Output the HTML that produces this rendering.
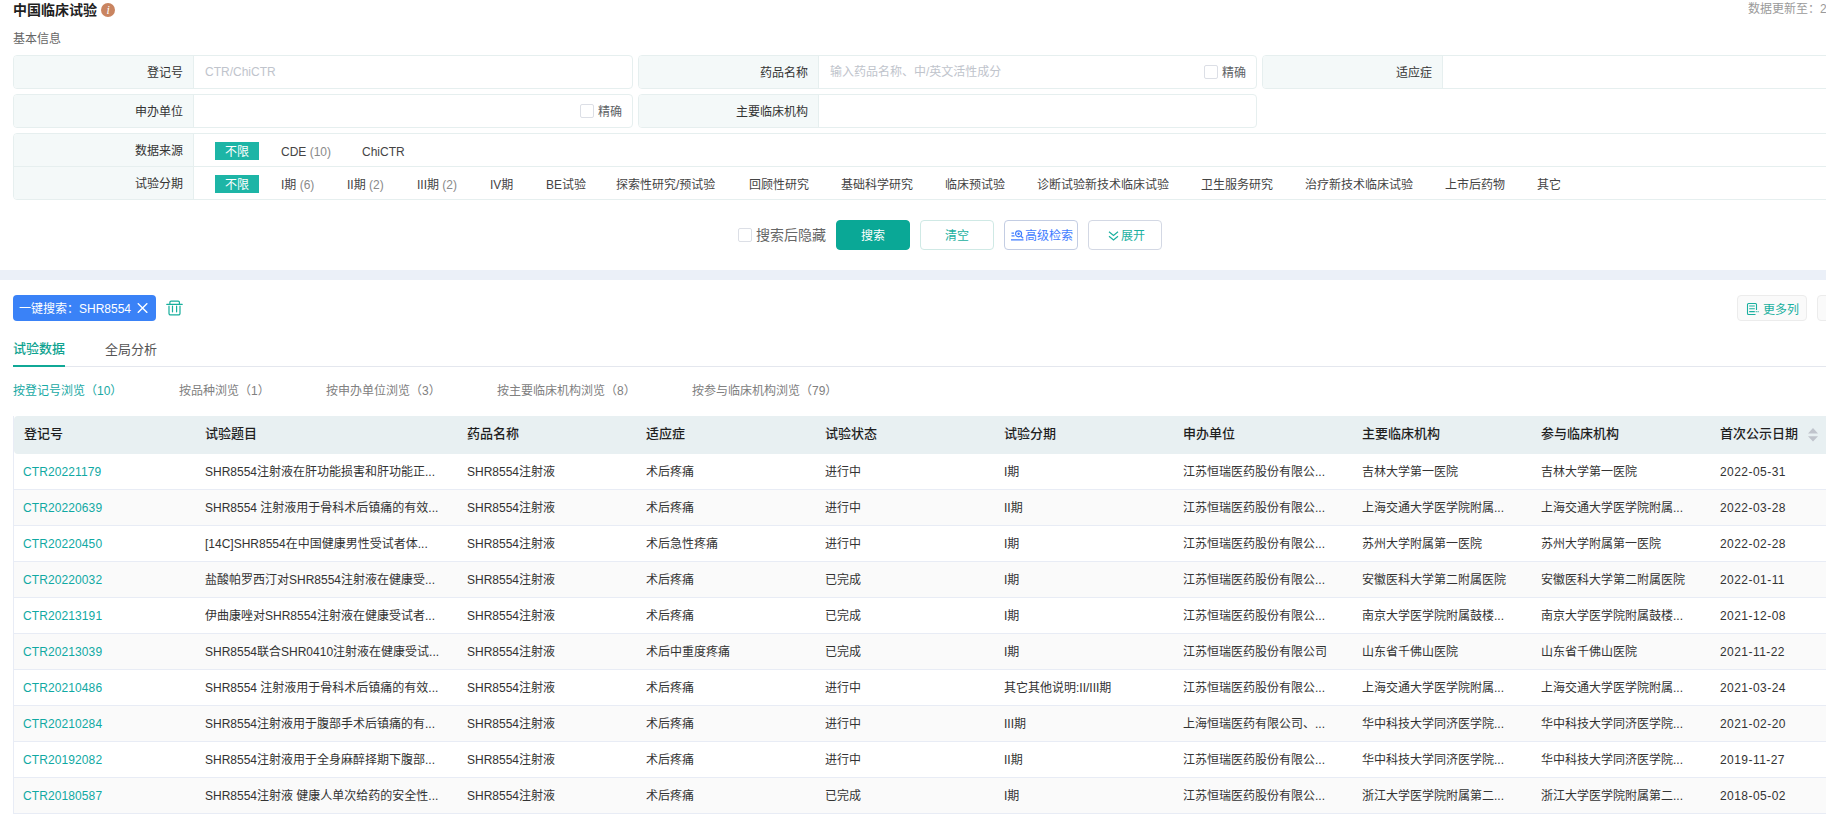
<!DOCTYPE html>
<html lang="zh-CN"><head><meta charset="utf-8"><title>中国临床试验</title>
<style>
*{box-sizing:border-box;margin:0;padding:0}
html,body{width:1826px;height:816px;overflow:hidden;background:#fff}
body{position:relative;font-family:"Liberation Sans", "Noto Sans CJK SC", sans-serif;font-size:12px;color:#333;line-height:1}
.a{position:absolute;white-space:nowrap}
.t{position:absolute;white-space:nowrap;line-height:20px;height:20px}
.l{letter-spacing:0.35px}
.box{position:absolute;border:1px solid #e6efef;border-radius:4px;background:#fff;overflow:hidden}
.lab{position:absolute;left:0;top:0;bottom:0;width:180px;background:#f4f9f9;border-right:1px solid #e6efef}
.labt{position:absolute;right:10px;white-space:nowrap;line-height:20px;color:#333}
.ph{color:#c0c4cc}
.cb{position:absolute;width:14px;height:14px;border:1px solid #dcdfe6;border-radius:2px;background:#fff}
.tag{position:absolute;width:44px;height:18px;background:#1db5a6;color:#fff;text-align:center;line-height:20px}
.opt{position:absolute;white-space:nowrap;line-height:20px;height:20px;color:#444}
.opt i{font-style:normal;color:#8a8a8a}
.btn{position:absolute;height:30px;width:74px;border-radius:4px;border:1px solid #dcdfe6;background:#fff;line-height:30px;text-align:center;font-size:12px}
.teal{color:#1ab09f}
.th{position:absolute;top:415px;line-height:38px;height:38px;font-size:13px;font-weight:500;color:#1f1f1f;white-space:nowrap}
.row{position:absolute;left:14px;width:1812px;height:36px;border-bottom:1px solid #e8ecf5}
.row.s{background:#fafafa}
.c{position:absolute;top:1px;line-height:35px;height:35px;white-space:nowrap;color:#333}
.c.k{color:#10a9a3;letter-spacing:0.1px;margin-left:-1px}
.c.d{letter-spacing:0.45px}
.st{position:absolute;top:384px;line-height:14px;color:#808080;white-space:nowrap}
</style></head>
<body>
<div class="a" style="left:13px;top:0;line-height:20px;font-size:14px;font-weight:bold;color:#1f1f1f">中国临床试验</div>
<svg class="a" style="left:101px;top:3px" width="14" height="14" viewBox="0 0 14 14"><circle cx="7" cy="7" r="7" fill="#c98460"/><text x="7.2" y="11" font-size="12" font-style="italic" font-family="Liberation Serif, serif" fill="#fff" text-anchor="middle">i</text></svg>
<div class="a" style="left:13px;top:29px;line-height:20px;color:#666">基本信息</div>
<div class="a" style="left:1748px;top:-1px;line-height:20px;color:#9a9a9a">数据更新至：2022-06-01</div>
<div class="box" style="left:13px;top:55px;width:620px;height:34px"><div class="lab"><span class="labt" style="top:7px">登记号</span></div><span class="t ph" style="left:191px;top:6px">CTR/ChiCTR</span></div>
<div class="box" style="left:638px;top:55px;width:619px;height:34px"><div class="lab"><span class="labt" style="top:7px">药品名称</span></div><span class="t ph" style="left:191px;top:6px">输入药品名称、中/英文活性成分</span><span class="cb" style="left:565px;top:9px"></span><span class="t" style="left:583px;top:7px;color:#606266">精确</span></div>
<div class="box" style="left:1262px;top:55px;width:620px;height:34px"><div class="lab"><span class="labt" style="top:7px">适应症</span></div></div>
<div class="box" style="left:13px;top:94px;width:620px;height:34px"><div class="lab"><span class="labt" style="top:7px">申办单位</span></div><span class="cb" style="left:566px;top:9px"></span><span class="t" style="left:584px;top:7px;color:#606266">精确</span></div>
<div class="box" style="left:638px;top:94px;width:619px;height:34px"><div class="lab"><span class="labt" style="top:7px">主要临床机构</span></div></div>
<div class="box" style="left:13px;top:133px;width:1840px;height:67px"><div class="lab"><span class="labt" style="top:7px">数据来源</span><span class="labt" style="top:40px">试验分期</span></div><div class="a" style="left:0;top:32px;width:1840px;height:1px;background:#e6efef"></div><span class="tag" style="left:201px;top:8px">不限</span><span class="opt" style="left:267px;top:8px">CDE <i>(10)</i></span><span class="opt" style="left:348px;top:8px">ChiCTR</span><span class="tag" style="left:201px;top:41px">不限</span><span class="opt" style="left:267px;top:41px">I期 <i>(6)</i></span><span class="opt" style="left:333px;top:41px">II期 <i>(2)</i></span><span class="opt" style="left:403px;top:41px">III期 <i>(2)</i></span><span class="opt" style="left:476px;top:41px">IV期</span><span class="opt" style="left:532px;top:41px">BE试验</span><span class="opt" style="left:602px;top:41px">探索性研究/预试验</span><span class="opt" style="left:735px;top:41px">回顾性研究</span><span class="opt" style="left:827px;top:41px">基础科学研究</span><span class="opt" style="left:931px;top:41px">临床预试验</span><span class="opt" style="left:1023px;top:41px">诊断试验新技术临床试验</span><span class="opt" style="left:1187px;top:41px">卫生服务研究</span><span class="opt" style="left:1291px;top:41px">治疗新技术临床试验</span><span class="opt" style="left:1431px;top:41px">上市后药物</span><span class="opt" style="left:1523px;top:41px">其它</span></div>
<span class="cb" style="left:738px;top:228px"></span><div class="a" style="left:756px;top:225px;line-height:20px;font-size:14px;color:#666">搜索后隐藏</div>
<div class="btn" style="left:836px;top:220px;background:#0aa896;border-color:#0aa896;color:#fff">搜索</div>
<div class="btn teal" style="left:920px;top:220px;border-color:#cfe9e5">清空</div>
<div class="btn" style="left:1004px;top:220px;border-color:#c3cde3;color:#3f7cff;text-align:left"><svg class="a" style="left:6px;top:9px" width="13" height="11" viewBox="0 0 13 11" fill="none" stroke="#3f7cff" stroke-width="1.2"><circle cx="7.6" cy="3.8" r="3"/><circle cx="7.6" cy="3.8" r="0.6" fill="#3f7cff"/><path d="M9.8 6l2.4 2.2M0 9.9h12.5M0.5 3.2h2.5M0.5 5.8h3"/></svg><span class="a" style="left:20px;top:0">高级检索</span></div>
<div class="btn teal" style="left:1088px;top:220px;border-color:#d3d8e4;text-align:left"><svg class="a" style="left:19px;top:9.5px" width="11" height="10" viewBox="0 0 11 10" fill="none" stroke="#1ab09f" stroke-width="1.2"><path d="M1 0.8l4.5 3.7L10 0.8M1 5.2l4.5 3.7L10 5.2"/></svg><span class="a" style="left:32px;top:0">展开</span></div>
<div class="a" style="left:0;top:270px;width:1826px;height:10px;background:#ebf0f8"></div>
<div class="a" style="left:13px;top:295px;width:143px;height:26px;border-radius:4px;background:#3a82f7;color:#fff;line-height:26px"><span class="a" style="left:6px;top:1px">一键搜索：SHR8554</span><svg class="a" style="left:124px;top:8px" width="11" height="10" viewBox="0 0 11 10" stroke="#fff" stroke-width="1.4" fill="none"><path d="M0.8 0.3l9.5 9.5M10.3 0.3l-9.5 9.5"/></svg></div>
<svg class="a" style="left:166px;top:299px" width="17" height="17" viewBox="0 0 17 17" fill="none" stroke="#17ae9c" stroke-width="1.2" stroke-linecap="round"><path d="M0.8 5.4H16.2M3.9 5.2V3.3a1.2 1.2 0 0 1 1.2-1.2h7.1a1.2 1.2 0 0 1 1.2 1.2v1.9M3 7.2v7.2a1.5 1.5 0 0 0 1.5 1.5h8a1.5 1.5 0 0 0 1.5-1.5V7.2M6.5 7.2v5.6M10.6 7.2v5.6"/></svg>
<div class="a" style="left:1737px;top:295px;width:70px;height:26px;border:1px solid #ececec;border-radius:4px;background:#fafafa"><svg class="a" style="left:8px;top:6px" width="14" height="14" viewBox="0 0 14 14" fill="none" stroke="#1ab09f" stroke-width="1.1"><path d="M10.5 8V2.5a1 1 0 0 0-1-1h-7a1 1 0 0 0-1 1v9a1 1 0 0 0 1 1h7M3.2 4h5.6M3.2 6.7h5.6"/><path d="M3.2 9.6h9.6" stroke-dasharray="5.6 0.9 1 0.9 1 0.9"/></svg><span class="a teal" style="left:25px;top:1px;line-height:26px">更多列</span></div>
<div class="a" style="left:1817px;top:295px;width:70px;height:26px;border:1px solid #ececec;border-radius:4px;background:#fafafa"></div>
<div class="a" style="left:13px;top:366px;width:1813px;height:1px;background:#e4e7ee"></div>
<div class="a" style="left:13px;top:365px;width:52px;height:2px;background:#10a896"></div>
<div class="a" style="left:13px;top:339px;line-height:20px;font-size:13px;font-weight:500;color:#0ea390">试验数据</div>
<div class="a" style="left:105px;top:340px;line-height:20px;font-size:13px;color:#555">全局分析</div>
<div class="st" style="left:13px;color:#18a9a4">按登记号浏览（10）</div><div class="st" style="left:179px">按品种浏览（1）</div><div class="st" style="left:326px">按申办单位浏览（3）</div><div class="st" style="left:497px">按主要临床机构浏览（8）</div><div class="st" style="left:692px">按参与临床机构浏览（79）</div>
<div class="a" style="left:13px;top:416px;width:1px;height:398px;background:#e8ecf5"></div>
<div class="a" style="left:14px;top:416px;width:1812px;height:38px;background:#e8f0f2;border-radius:4px 0 0 4px"></div>
<div class="th" style="left:24px">登记号</div><div class="th" style="left:205px">试验题目</div><div class="th" style="left:467px">药品名称</div><div class="th" style="left:646px">适应症</div><div class="th" style="left:825px">试验状态</div><div class="th" style="left:1004px">试验分期</div><div class="th" style="left:1183px">申办单位</div><div class="th" style="left:1362px">主要临床机构</div><div class="th" style="left:1541px">参与临床机构</div><div class="th" style="left:1720px">首次公示日期</div><svg class="a" style="left:1808px;top:428px" width="10" height="14" viewBox="0 0 10 14"><path d="M5 0l5 5.4H0z M5 13.6l5-5.4H0z" fill="#c0c4cc"/></svg>
<div class="row" style="top:454px"><span class="c k" style="left:10px">CTR20221179</span><span class="c" style="left:191px">SHR8554注射液在肝功能损害和肝功能正...</span><span class="c" style="left:453px">SHR8554注射液</span><span class="c" style="left:632px">术后疼痛</span><span class="c" style="left:811px">进行中</span><span class="c" style="left:990px">I期</span><span class="c" style="left:1169px">江苏恒瑞医药股份有限公...</span><span class="c" style="left:1348px">吉林大学第一医院</span><span class="c" style="left:1527px">吉林大学第一医院</span><span class="c d" style="left:1706px">2022-05-31</span></div>
<div class="row s" style="top:490px"><span class="c k" style="left:10px">CTR20220639</span><span class="c" style="left:191px">SHR8554 注射液用于骨科术后镇痛的有效...</span><span class="c" style="left:453px">SHR8554注射液</span><span class="c" style="left:632px">术后疼痛</span><span class="c" style="left:811px">进行中</span><span class="c" style="left:990px">II期</span><span class="c" style="left:1169px">江苏恒瑞医药股份有限公...</span><span class="c" style="left:1348px">上海交通大学医学院附属...</span><span class="c" style="left:1527px">上海交通大学医学院附属...</span><span class="c d" style="left:1706px">2022-03-28</span></div>
<div class="row" style="top:526px"><span class="c k" style="left:10px">CTR20220450</span><span class="c" style="left:191px">[14C]SHR8554在中国健康男性受试者体...</span><span class="c" style="left:453px">SHR8554注射液</span><span class="c" style="left:632px">术后急性疼痛</span><span class="c" style="left:811px">进行中</span><span class="c" style="left:990px">I期</span><span class="c" style="left:1169px">江苏恒瑞医药股份有限公...</span><span class="c" style="left:1348px">苏州大学附属第一医院</span><span class="c" style="left:1527px">苏州大学附属第一医院</span><span class="c d" style="left:1706px">2022-02-28</span></div>
<div class="row s" style="top:562px"><span class="c k" style="left:10px">CTR20220032</span><span class="c" style="left:191px">盐酸帕罗西汀对SHR8554注射液在健康受...</span><span class="c" style="left:453px">SHR8554注射液</span><span class="c" style="left:632px">术后疼痛</span><span class="c" style="left:811px">已完成</span><span class="c" style="left:990px">I期</span><span class="c" style="left:1169px">江苏恒瑞医药股份有限公...</span><span class="c" style="left:1348px">安徽医科大学第二附属医院</span><span class="c" style="left:1527px">安徽医科大学第二附属医院</span><span class="c d" style="left:1706px">2022-01-11</span></div>
<div class="row" style="top:598px"><span class="c k" style="left:10px">CTR20213191</span><span class="c" style="left:191px">伊曲康唑对SHR8554注射液在健康受试者...</span><span class="c" style="left:453px">SHR8554注射液</span><span class="c" style="left:632px">术后疼痛</span><span class="c" style="left:811px">已完成</span><span class="c" style="left:990px">I期</span><span class="c" style="left:1169px">江苏恒瑞医药股份有限公...</span><span class="c" style="left:1348px">南京大学医学院附属鼓楼...</span><span class="c" style="left:1527px">南京大学医学院附属鼓楼...</span><span class="c d" style="left:1706px">2021-12-08</span></div>
<div class="row s" style="top:634px"><span class="c k" style="left:10px">CTR20213039</span><span class="c" style="left:191px">SHR8554联合SHR0410注射液在健康受试...</span><span class="c" style="left:453px">SHR8554注射液</span><span class="c" style="left:632px">术后中重度疼痛</span><span class="c" style="left:811px">已完成</span><span class="c" style="left:990px">I期</span><span class="c" style="left:1169px">江苏恒瑞医药股份有限公司</span><span class="c" style="left:1348px">山东省千佛山医院</span><span class="c" style="left:1527px">山东省千佛山医院</span><span class="c d" style="left:1706px">2021-11-22</span></div>
<div class="row" style="top:670px"><span class="c k" style="left:10px">CTR20210486</span><span class="c" style="left:191px">SHR8554 注射液用于骨科术后镇痛的有效...</span><span class="c" style="left:453px">SHR8554注射液</span><span class="c" style="left:632px">术后疼痛</span><span class="c" style="left:811px">进行中</span><span class="c" style="left:990px">其它其他说明:II/III期</span><span class="c" style="left:1169px">江苏恒瑞医药股份有限公...</span><span class="c" style="left:1348px">上海交通大学医学院附属...</span><span class="c" style="left:1527px">上海交通大学医学院附属...</span><span class="c d" style="left:1706px">2021-03-24</span></div>
<div class="row s" style="top:706px"><span class="c k" style="left:10px">CTR20210284</span><span class="c" style="left:191px">SHR8554注射液用于腹部手术后镇痛的有...</span><span class="c" style="left:453px">SHR8554注射液</span><span class="c" style="left:632px">术后疼痛</span><span class="c" style="left:811px">进行中</span><span class="c" style="left:990px">III期</span><span class="c" style="left:1169px">上海恒瑞医药有限公司、...</span><span class="c" style="left:1348px">华中科技大学同济医学院...</span><span class="c" style="left:1527px">华中科技大学同济医学院...</span><span class="c d" style="left:1706px">2021-02-20</span></div>
<div class="row" style="top:742px"><span class="c k" style="left:10px">CTR20192082</span><span class="c" style="left:191px">SHR8554注射液用于全身麻醉择期下腹部...</span><span class="c" style="left:453px">SHR8554注射液</span><span class="c" style="left:632px">术后疼痛</span><span class="c" style="left:811px">进行中</span><span class="c" style="left:990px">II期</span><span class="c" style="left:1169px">江苏恒瑞医药股份有限公...</span><span class="c" style="left:1348px">华中科技大学同济医学院...</span><span class="c" style="left:1527px">华中科技大学同济医学院...</span><span class="c d" style="left:1706px">2019-11-27</span></div>
<div class="row s" style="top:778px"><span class="c k" style="left:10px">CTR20180587</span><span class="c" style="left:191px">SHR8554注射液 健康人单次给药的安全性...</span><span class="c" style="left:453px">SHR8554注射液</span><span class="c" style="left:632px">术后疼痛</span><span class="c" style="left:811px">已完成</span><span class="c" style="left:990px">I期</span><span class="c" style="left:1169px">江苏恒瑞医药股份有限公...</span><span class="c" style="left:1348px">浙江大学医学院附属第二...</span><span class="c" style="left:1527px">浙江大学医学院附属第二...</span><span class="c d" style="left:1706px">2018-05-02</span></div>
</body></html>
